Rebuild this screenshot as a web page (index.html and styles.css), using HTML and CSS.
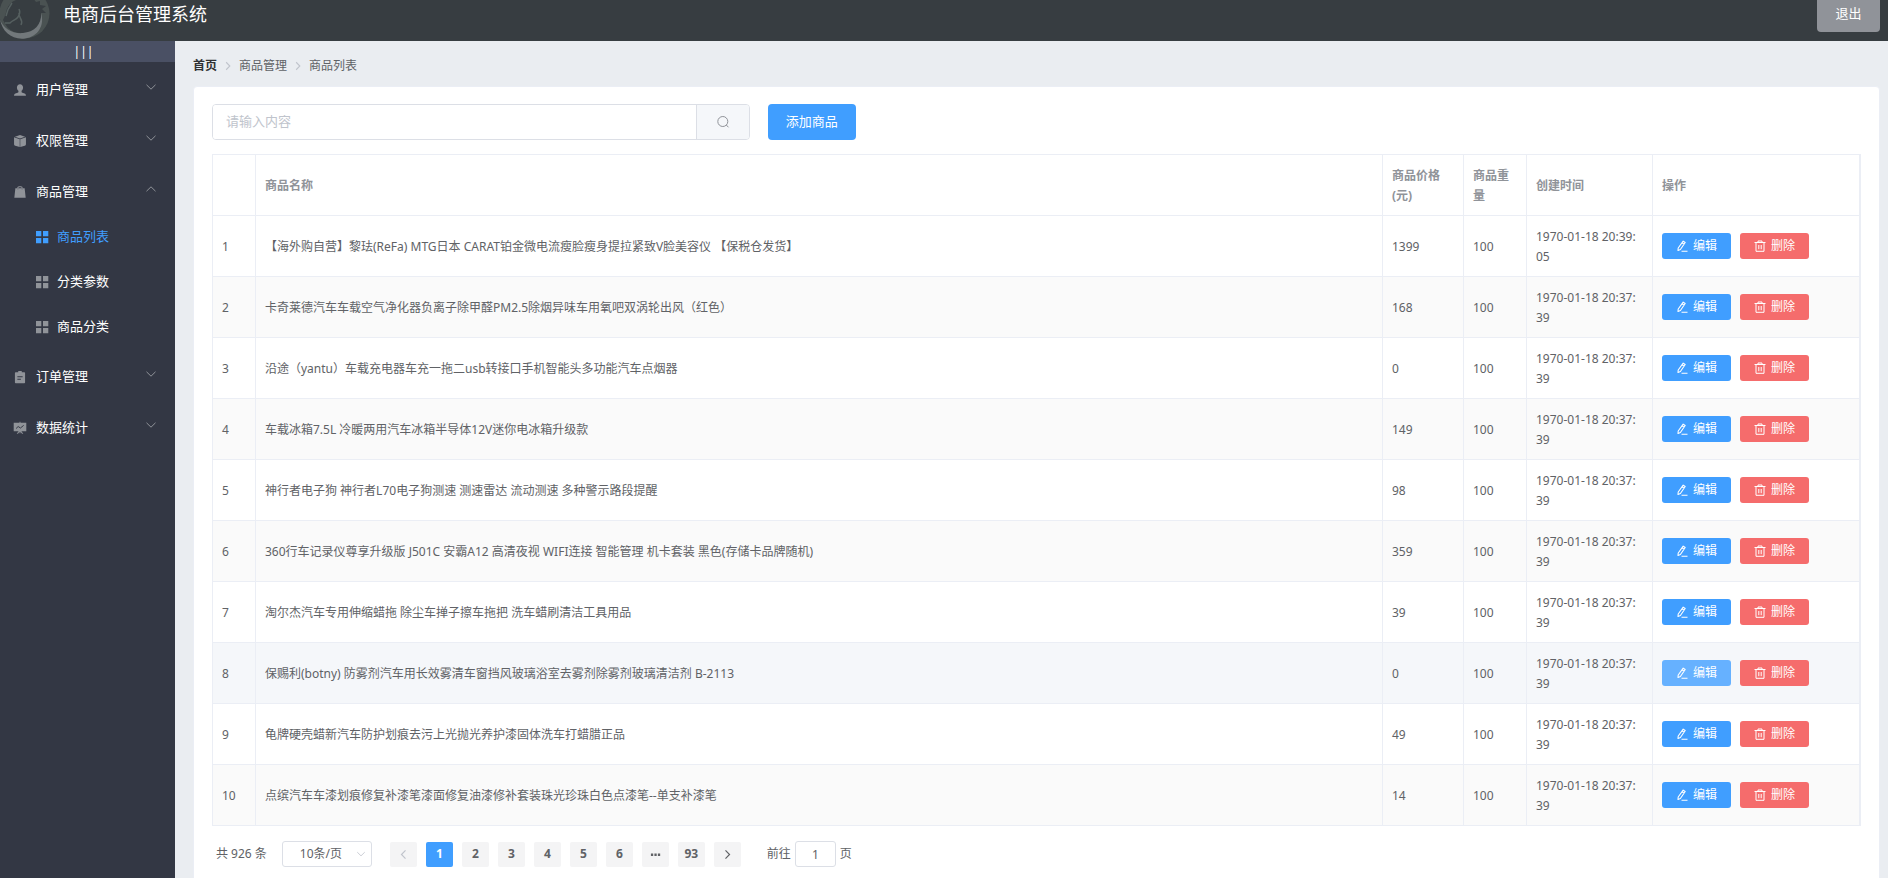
FILE: index.html
```html
<!DOCTYPE html>
<html lang="zh-CN">
<head>
<meta charset="utf-8">
<title>电商后台管理系统</title>
<link rel="stylesheet" href="styles.css">
</head>
<body>
<svg class="sprite" aria-hidden="true">
  <symbol id="i-user" viewBox="0 0 16 16"><path fill="currentColor" d="M8 1.500c2.100 0 3.500 1.500 3.500 3.700 0 1.600-.7 2.900-1.700 3.700v1.300c0 .5.400.8 1 1l2.400.8c1 .4 1.600 1.200 1.600 2.500H1.200c0-1.300.6-2.100 1.600-2.500l2.400-.8c.6-.2 1-.5 1-1V8.900C5.200 8.100 4.500 6.800 4.500 5.200 4.500 3 5.900 1.500 8 1.500z"/></symbol>
  <symbol id="i-cube" viewBox="0 0 16 16"><path fill="currentColor" d="M8 1l5.800 2L8 5.100 2.200 3zM1.200 3.800l6.500 2.300v8.700l-5.200-1.500c-.8-.3-1.300-.9-1.300-1.700zM14.800 3.800L8.300 6.100v8.700l5.200-1.500c.8-.3 1.300-.9 1.300-1.700z"/></symbol>
  <symbol id="i-bag" viewBox="0 0 16 16"><path fill="none" stroke="currentColor" stroke-width="1.200" d="M5.500 6V3.500c0-1 .6-1.600 1.500-1.600h2c.9 0 1.500.6 1.500 1.600V6"/><path fill="currentColor" d="M2.700 3.800h2.300v1.600h.9V3.800h4.200v1.600h.9V3.800h2.300L14.500 14.500H1.500z"/></symbol>
  <symbol id="i-grid" viewBox="0 0 14 14"><path fill="currentColor" d="M1 1h5.300v5.300H1zM8 1h5.300v5.300H8zM1 8h5.300v5.300H1zM8 8h5.300v5.300H8z"/></symbol>
  <symbol id="i-order" viewBox="0 0 16 16"><path fill="currentColor" fill-rule="evenodd" d="M6 1h4v1.500h3c.4 0 .8.300.8.8v10.900c0 .4-.4.8-.8.8H3c-.4 0-.8-.4-.8-.8V3.300c0-.5.400-.8.8-.8h3zM5 7v1.200h6V7zM5 10v1.200h4V10z"/></symbol>
  <symbol id="i-chart" viewBox="0 0 16 16"><path fill="currentColor" d="M7.500.8h1V2h6.700v9.800H9.600l2.200 2.800h-1.500L8.500 12.300V14h-1v-1.700l-1.800 2.300H4.200l2.200-2.800H.8V2h6.700z"/><path fill="none" stroke="#333744" stroke-width="1.100" d="M3.500 8.600l2.400-2.300 2.600 1.700 3.700-3"/></symbol>
  <symbol id="i-down" viewBox="0 0 12 12"><path fill="none" stroke="currentColor" d="M1.500 3.800L6 8.200l4.500-4.400"/></symbol>
  <symbol id="i-up" viewBox="0 0 12 12"><path fill="none" stroke="currentColor" d="M1.500 8.200L6 3.800l4.500 4.400"/></symbol>
  <symbol id="i-right" viewBox="0 0 12 12"><path fill="none" stroke="currentColor" stroke-width="1.300" d="M3.800 1.500L8.200 6l-4.400 4.500"/></symbol>
  <symbol id="i-left" viewBox="0 0 12 12"><path fill="none" stroke="currentColor" stroke-width="1.300" d="M8.200 1.500L3.800 6l4.400 4.500"/></symbol>
  <symbol id="i-search" viewBox="0 0 14 14"><circle cx="6.800" cy="6.500" r="5" fill="none" stroke="currentColor"/><path fill="none" stroke="currentColor" d="M10.300 10l2.200 2.300"/></symbol>
  <symbol id="i-edit" viewBox="0 0 12 12"><path fill="none" stroke="currentColor" stroke-width="1.100" stroke-linejoin="round" d="M7.200 1.200l2 1.300-4.800 7L2 10.500l.2-2.500zM6.100 2.800l2.100 1.400M5.500 11.200h6"/></symbol>
  <symbol id="i-trash" viewBox="0 0 12 12"><path fill="none" stroke="currentColor" d="M.5 2.500h11M4 2.500V1h4v1.500M2 2.500v8.800h8V2.500M4.800 5v4.200M7.200 5v4.200"/></symbol>
</svg>

<header class="header">
  <div class="brand">
    <svg class="logo" viewBox="0 0 52 42" aria-hidden="true">
      <circle cx="24.500" cy="13.500" r="25" fill="#4a5252"/>
      <path fill="#373d41" d="M3 20c2-4 3-7 4-11 2-5 6-9 13-10l13-1 3 4 4-1 0 4 6 1-4 3 4 4-5 0c1 6-2 13-8 17-8 5-19 4-25-2-2-2-3-5-5-8z"/>
      <path fill="#72787b" d="M0 19c3 10 13 15 23 14 11-1 19-8 18-20 4 12-3 24-16 25.500C12 40 2 32 0 19z"/>
      <path fill="none" stroke="#566060" stroke-width="1.500" d="M5 23l5 0c3-3 6-3 8-6 2-3 2-6 1-8M19 13c-1 5 5 6 2 12M6 16c1-5 3-9 6-13"/>
    </svg>
    <span>电商后台管理系统</span>
  </div>
  <button class="logout" type="button">退出</button>
</header>

<div class="body">
  <aside class="aside">
    <button class="toggle" type="button" aria-label="折叠菜单">|||</button>
    <nav class="menu">
      <a class="item" href="#"><svg class="ico"><use href="#i-user"/></svg><span>用户管理</span><svg class="arrow"><use href="#i-down"/></svg></a>
      <a class="item" href="#"><svg class="ico"><use href="#i-cube"/></svg><span>权限管理</span><svg class="arrow"><use href="#i-down"/></svg></a>
      <a class="item" href="#"><svg class="ico"><use href="#i-bag"/></svg><span>商品管理</span><svg class="arrow"><use href="#i-up"/></svg></a>
      <div class="submenu">
        <a class="subitem active" href="#"><svg class="grid"><use href="#i-grid"/></svg><span>商品列表</span></a>
        <a class="subitem" href="#"><svg class="grid"><use href="#i-grid"/></svg><span>分类参数</span></a>
        <a class="subitem" href="#"><svg class="grid"><use href="#i-grid"/></svg><span>商品分类</span></a>
      </div>
      <a class="item" href="#"><svg class="ico"><use href="#i-order"/></svg><span>订单管理</span><svg class="arrow"><use href="#i-down"/></svg></a>
      <a class="item" href="#"><svg class="ico"><use href="#i-chart"/></svg><span>数据统计</span><svg class="arrow"><use href="#i-down"/></svg></a>
    </nav>
  </aside>

  <main class="main">
    <nav class="crumbs">
      <a class="home" href="#">首页</a><svg class="sep"><use href="#i-right"/></svg><span>商品管理</span><svg class="sep"><use href="#i-right"/></svg><span>商品列表</span>
    </nav>

    <section class="card">
      <div class="tools">
        <div class="search">
          <input class="search-input" type="text" placeholder="请输入内容" aria-label="搜索商品">
          <button class="search-btn" type="button" aria-label="搜索"><svg><use href="#i-search"/></svg></button>
        </div>
        <button class="add" type="button">添加商品</button>
      </div>

      <table class="table">
        <colgroup><col class="c-index"><col><col class="c-price"><col class="c-weight"><col class="c-time"><col class="c-ops"></colgroup>
        <thead>
          <tr><th></th><th>商品名称</th><th>商品价格(元)</th><th>商品重量</th><th>创建时间</th><th>操作</th></tr>
        </thead>
        <tbody>
          <tr><td>1</td><td>【海外购自营】黎珐(ReFa) MTG日本 CARAT铂金微电流瘦脸瘦身提拉紧致V脸美容仪 【保税仓发货】</td><td>1399</td><td>100</td><td>1970-01-18 20:39:05</td><td><div class="ops"><button class="btn edit" type="button"><svg><use href="#i-edit"/></svg>编辑</button><button class="btn del" type="button"><svg><use href="#i-trash"/></svg>删除</button></div></td></tr>
          <tr><td>2</td><td>卡奇莱德汽车车载空气净化器负离子除甲醛PM2.5除烟异味车用氧吧双涡轮出风（红色）</td><td>168</td><td>100</td><td>1970-01-18 20:37:39</td><td><div class="ops"><button class="btn edit" type="button"><svg><use href="#i-edit"/></svg>编辑</button><button class="btn del" type="button"><svg><use href="#i-trash"/></svg>删除</button></div></td></tr>
          <tr><td>3</td><td>沿途（yantu）车载充电器车充一拖二usb转接口手机智能头多功能汽车点烟器</td><td>0</td><td>100</td><td>1970-01-18 20:37:39</td><td><div class="ops"><button class="btn edit" type="button"><svg><use href="#i-edit"/></svg>编辑</button><button class="btn del" type="button"><svg><use href="#i-trash"/></svg>删除</button></div></td></tr>
          <tr><td>4</td><td>车载冰箱7.5L 冷暖两用汽车冰箱半导体12V迷你电冰箱升级款</td><td>149</td><td>100</td><td>1970-01-18 20:37:39</td><td><div class="ops"><button class="btn edit" type="button"><svg><use href="#i-edit"/></svg>编辑</button><button class="btn del" type="button"><svg><use href="#i-trash"/></svg>删除</button></div></td></tr>
          <tr><td>5</td><td>神行者电子狗 神行者L70电子狗测速 测速雷达 流动测速 多种警示路段提醒</td><td>98</td><td>100</td><td>1970-01-18 20:37:39</td><td><div class="ops"><button class="btn edit" type="button"><svg><use href="#i-edit"/></svg>编辑</button><button class="btn del" type="button"><svg><use href="#i-trash"/></svg>删除</button></div></td></tr>
          <tr><td>6</td><td>360行车记录仪尊享升级版 J501C 安霸A12 高清夜视 WIFI连接 智能管理 机卡套装 黑色(存储卡品牌随机)</td><td>359</td><td>100</td><td>1970-01-18 20:37:39</td><td><div class="ops"><button class="btn edit" type="button"><svg><use href="#i-edit"/></svg>编辑</button><button class="btn del" type="button"><svg><use href="#i-trash"/></svg>删除</button></div></td></tr>
          <tr><td>7</td><td>淘尔杰汽车专用伸缩蜡拖 除尘车掸子擦车拖把 洗车蜡刷清洁工具用品</td><td>39</td><td>100</td><td>1970-01-18 20:37:39</td><td><div class="ops"><button class="btn edit" type="button"><svg><use href="#i-edit"/></svg>编辑</button><button class="btn del" type="button"><svg><use href="#i-trash"/></svg>删除</button></div></td></tr>
          <tr class="hover"><td>8</td><td>保赐利(botny) 防雾剂汽车用长效雾清车窗挡风玻璃浴室去雾剂除雾剂玻璃清洁剂 B-2113</td><td>0</td><td>100</td><td>1970-01-18 20:37:39</td><td><div class="ops"><button class="btn edit" type="button"><svg><use href="#i-edit"/></svg>编辑</button><button class="btn del" type="button"><svg><use href="#i-trash"/></svg>删除</button></div></td></tr>
          <tr><td>9</td><td>龟牌硬壳蜡新汽车防护划痕去污上光抛光养护漆固体洗车打蜡腊正品</td><td>49</td><td>100</td><td>1970-01-18 20:37:39</td><td><div class="ops"><button class="btn edit" type="button"><svg><use href="#i-edit"/></svg>编辑</button><button class="btn del" type="button"><svg><use href="#i-trash"/></svg>删除</button></div></td></tr>
          <tr><td>10</td><td>点缤汽车车漆划痕修复补漆笔漆面修复油漆修补套装珠光珍珠白色点漆笔--单支补漆笔</td><td>14</td><td>100</td><td>1970-01-18 20:37:39</td><td><div class="ops"><button class="btn edit" type="button"><svg><use href="#i-edit"/></svg>编辑</button><button class="btn del" type="button"><svg><use href="#i-trash"/></svg>删除</button></div></td></tr>
        </tbody>
      </table>

      <div class="pager">
        <span class="total">共 926 条</span>
        <div class="size">
          <select aria-label="每页条数"><option>10条/页</option></select>
          <svg><use href="#i-down"/></svg>
        </div>
        <div class="pages">
          <button type="button" disabled aria-label="上一页"><svg><use href="#i-left"/></svg></button>
          <button type="button" class="current">1</button>
          <button type="button">2</button>
          <button type="button">3</button>
          <button type="button">4</button>
          <button type="button">5</button>
          <button type="button">6</button>
          <button type="button" aria-label="向后 5 页"><svg viewBox="0 0 12 12"><path fill="currentColor" d="M1 5h2.500v2.500H1zM4.800 5h2.500v2.500H4.800zM8.600 5h2.500v2.500H8.600z"/></svg></button>
          <button type="button">93</button>
          <button type="button" aria-label="下一页"><svg><use href="#i-right"/></svg></button>
        </div>
        <label class="jump">前往<input type="text" value="1">页</label>
      </div>
    </section>
  </main>
</div>
</body>
</html>
```

FILE: styles.css
```css
* { box-sizing: border-box; }
body {
  margin: 0;
  height: 100vh;
  display: flex;
  flex-direction: column;
  font: 12px/20px "Noto Sans", "Noto Sans CJK SC", sans-serif;
  color: #606266;
}
button, input, select { font: inherit; color: inherit; margin: 0; }
button { cursor: pointer; border: 0; padding: 0; }
a { color: inherit; text-decoration: none; }
svg { display: block; flex: none; }
.sprite { position: absolute; width: 0; height: 0; }

.header {
  flex: none;
  height: 41px;
  display: flex;
  justify-content: space-between;
  align-items: flex-start;
  padding-right: 8px;
  background: #373d41;
  color: #fff;
}
.brand { display: flex; gap: 11px; font-size: 18px; line-height: 28px; }
.logo { width: 52px; height: 42px; }
.logout {
  width: 63px;
  height: 32px;
  padding-bottom: 6px;
  border-radius: 0 0 4px 4px;
  background: #909399;
  font-size: 13px;
}

.body { flex: 1; min-height: 0; display: flex; }
.aside { flex: none; width: 175px; background: #333744; color: #fff; overflow: hidden; }
.toggle {
  display: block;
  width: 100%;
  height: 21px;
  background: #4a5064;
  color: #fff;
  line-height: 21px;
  padding-right: 8px;
}
.menu { display: flex; flex-direction: column; padding-top: 1px; font-size: 13px; }
.item { display: flex; align-items: center; height: 50px; padding: 3px 18px 0 13px; }
.item + .item { margin-top: 1px; }
.ico { width: 14px; height: 14px; margin-right: 9px; color: #909399; }
.item span { padding-bottom: 2px; }
.arrow { width: 12px; height: 12px; margin: 0 0 6px auto; color: #909399; }
.subitem { display: flex; align-items: center; height: 45px; padding-left: 35px; gap: 8px; }
.subitem span { padding-bottom: 4px; }
.grid { width: 14px; height: 14px; margin-bottom: 2px; color: #909399; }
.active, .active .grid { color: #409eff; }

.main {
  flex: 1;
  min-width: 0;
  padding: 15px 8px 18px 18px;
  background: #eaedf1;
  overflow: auto;
  scrollbar-width: none;
}
.crumbs { display: flex; align-items: center; height: 20px; margin-bottom: 10px; }
.crumbs .home { font-weight: 700; color: #303133; }
.sep { width: 10px; height: 10px; margin: 0 6px; color: #c0c4cc; }

.card {
  padding: 17px 18px;
  background: #fff;
  border: 1px solid #ebeef5;
  border-radius: 4px;
}
.tools { display: flex; gap: 18px; }
.search { flex: none; display: flex; width: calc((100% + 18px) / 3 - 18px); height: 36px; border: 1px solid #dcdfe6; border-radius: 4px; overflow: hidden; }
.search-input { flex: 1; min-width: 0; border: 0; outline: 0; padding: 0 13px 2px; font-size: 13px; background: #fff; }
.search-input::placeholder { color: #c0c4cc; }
.search-btn { width: 53px; display: flex; align-items: center; justify-content: center; background: #f5f7fa; border-left: 1px solid #dcdfe6; color: #909399; }
.search-btn svg { width: 14px; height: 14px; }
.add { width: 88px; height: 36px; padding-bottom: 2px; border-radius: 4px; background: #409eff; color: #fff; font-size: 13px; }

.table {
  width: 100%;
  margin-top: 14px;
  table-layout: fixed;
  border-collapse: separate;
  border-spacing: 0;
  border: 1px solid #ebeef5;
  border-width: 1px 2px 0 1px;
}
.c-index { width: 43px; }
.c-price { width: 81px; }
.c-weight { width: 63px; }
.c-time { width: 126px; }
.c-ops { width: 206px; }
.table th, .table td {
  height: 61px;
  padding: 2px 10px 0 9px;
  border: solid #ebeef5;
  border-width: 0 1px 1px 0;
  text-align: left;
  word-break: break-all;
}
.table th:last-child, .table td:last-child { border-right: 0; }
.table th { color: #909399; font-weight: 700; }
.table tbody tr:nth-child(even) { background: #fafafa; }
.table tbody tr.hover { background: #f5f7fa; }
.ops { display: flex; gap: 9px; padding-bottom: 2px; }
.btn { display: flex; align-items: center; justify-content: center; gap: 5px; width: 69px; height: 26px; border-radius: 3px; color: #fff; }
.btn svg { width: 12px; height: 12px; }
.edit { background: #409eff; }
.del { background: #f56c6c; }
.hover .edit { background: #66b1ff; }

.pager { display: flex; align-items: center; margin-top: 15px; padding-left: 4px; }
.total { margin-right: 15px; }
.size { display: flex; align-items: center; width: 90px; height: 26px; border: 1px solid #dcdfe6; border-radius: 3px; margin-right: 18px; padding-right: 5px; }
.size select { flex: 1; height: 24px; appearance: none; border: 0; outline: 0; background: none; padding: 0 0 0 17px; }
.size svg { width: 10px; height: 10px; color: #c0c4cc; }
.pages { display: flex; gap: 9px; }
.pages button { display: flex; align-items: center; justify-content: center; width: 27px; height: 25px; border-radius: 2px; background: #f4f4f5; font-weight: 700; }
.pages svg { width: 11px; height: 11px; }
.pages button:disabled { color: #c0c4cc; }
.pages .current { background: #409eff; color: #fff; }
.jump { display: flex; align-items: center; gap: 4px; margin-left: 26px; }
.jump input { width: 41px; height: 26px; border: 1px solid #dcdfe6; border-radius: 3px; text-align: center; padding: 0; }
```
